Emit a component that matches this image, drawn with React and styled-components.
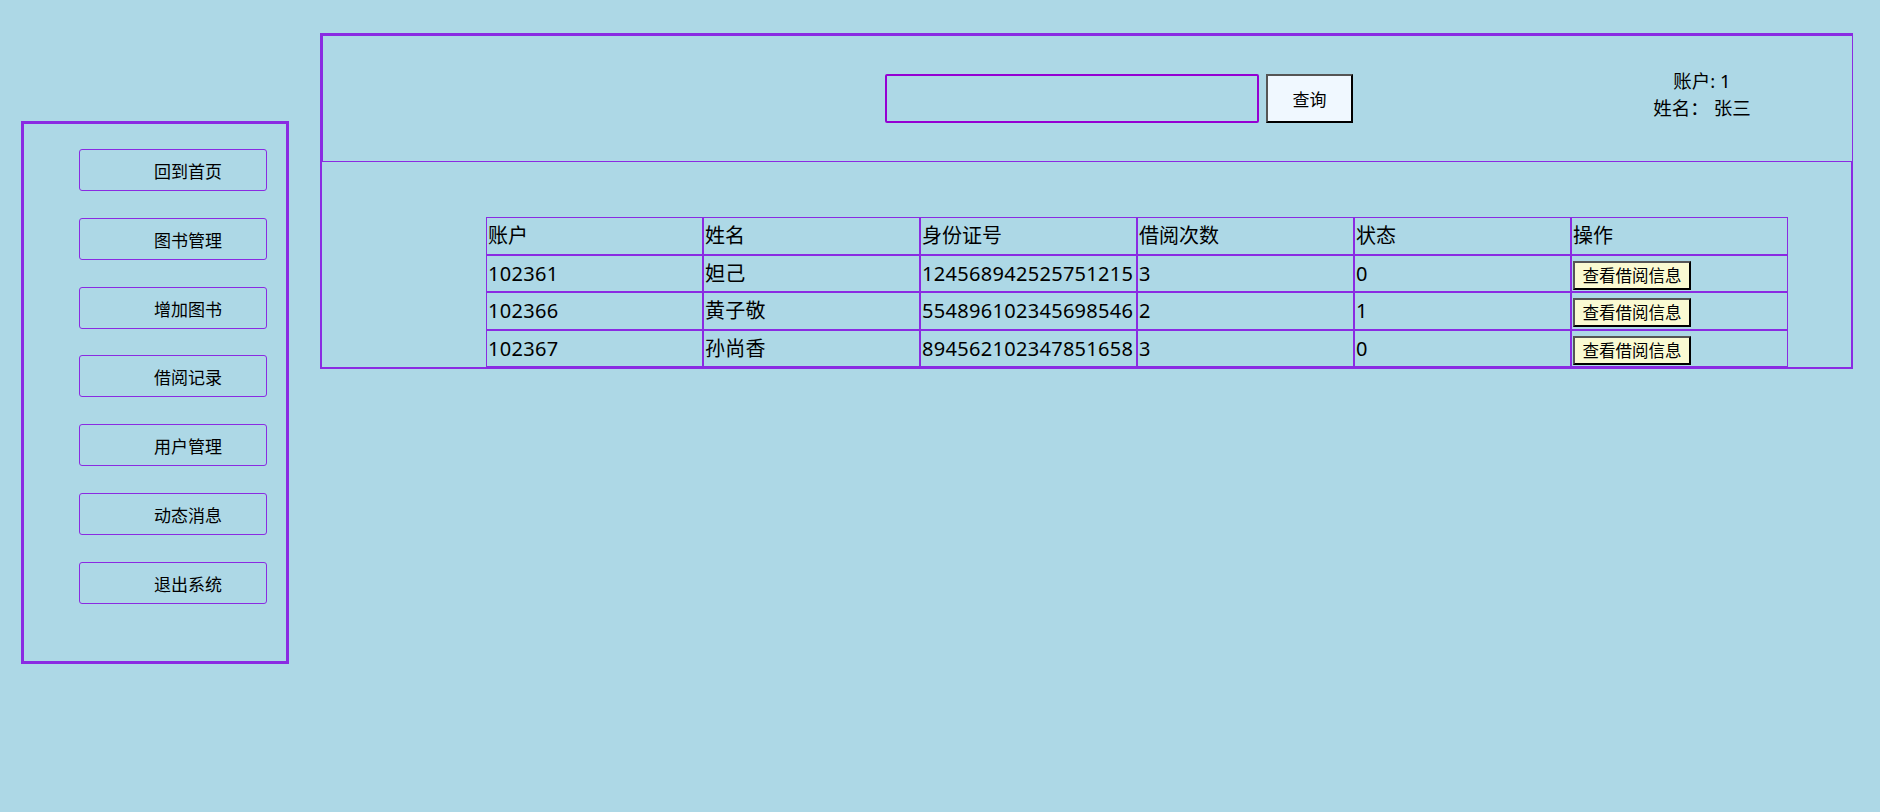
import { createGlobalStyle, styled } from "styled-components";

const menus = ["回到首页", "图书管理", "增加图书", "借阅记录", "用户管理", "动态消息", "退出系统"];

const users = [
  { id: "102361", name: "妲己", card: "124568942525751215", count: 3, state: 0 },
  { id: "102366", name: "黄子敬", card: "554896102345698546", count: 2, state: 1 },
  { id: "102367", name: "孙尚香", card: "894562102347851658", count: 3, state: 0 },
];

const App = () => {
  return (
    <>
      <GlobalStyle />
      <StPage>
        <StSide>
          {menus.map((m) => (
            <StMenuBtn key={m}>{m}</StMenuBtn>
          ))}
        </StSide>
        <StMain>
          <StHeader>
            <StSearch />
            <StQueryBtn>查询</StQueryBtn>
            <StAccount>
              <div>账户: 1</div>
              <div>姓名： 张三</div>
            </StAccount>
          </StHeader>
          <StContent>
            <StTable>
              <thead>
                <tr>
                  <StTh>账户</StTh>
                  <StTh>姓名</StTh>
                  <StTh>身份证号</StTh>
                  <StTh>借阅次数</StTh>
                  <StTh>状态</StTh>
                  <StTh>操作</StTh>
                </tr>
              </thead>
              <tbody>
                {users.map((u) => (
                  <tr key={u.id}>
                    <StTd>{u.id}</StTd>
                    <StTd>{u.name}</StTd>
                    <StTd>{u.card}</StTd>
                    <StTd>{u.count}</StTd>
                    <StTd>{u.state}</StTd>
                    <StTd>
                      <StInfoBtn>查看借阅信息</StInfoBtn>
                    </StTd>
                  </tr>
                ))}
              </tbody>
            </StTable>
          </StContent>
        </StMain>
      </StPage>
    </>
  );
};

export default App;

const GlobalStyle = createGlobalStyle`
  html, body {
    margin: 0;
    min-height: 100%;
    background-color: #add8e6;
  }
  body {
    font-family: "Noto Sans", "Noto Sans CJK SC", sans-serif;
    color: #000;
  }
`;

const StPage = styled.div`
  display: flex;
  align-items: flex-start;
  gap: 31px;
  padding: 33px 27px 0 21px;
  min-height: 812px;
  box-sizing: border-box;
`;

const StSide = styled.div`
  display: flex;
  flex-direction: column;
  gap: 26.8px;
  box-sizing: border-box;
  width: 268px;
  height: 543px;
  margin-top: 88px;
  padding: 25px 0 0 55px;
  border: 3px solid blueviolet;
  flex-shrink: 0;
`;

const StMenuBtn = styled.button`
  box-sizing: border-box;
  width: 188px;
  height: 42px;
  padding: 4px 0 0 74px;
  border: 1px solid blueviolet;
  border-radius: 3px;
  background: transparent;
  font-family: "Noto Sans", "Noto Sans CJK SC", sans-serif;
  font-size: 17px;
  line-height: 36px;
  text-align: left;
  color: #000;
  cursor: pointer;
`;

const StMain = styled.div`
  flex: 1;
  display: flex;
  flex-direction: column;
`;

const StHeader = styled.div`
  display: flex;
  align-items: center;
  height: 125px;
  padding-left: 562px;
  border-style: solid;
  border-color: blueviolet;
  border-width: 3px 1px 1px 3px;
`;

const StSearch = styled.input`
  box-sizing: border-box;
  width: 374px;
  height: 49px;
  border: 2px solid darkviolet;
  border-radius: 2px;
  background: transparent;
  outline: none;
`;

const StQueryBtn = styled.button`
  box-sizing: border-box;
  width: 87px;
  height: 49px;
  margin-left: 7px;
  border: 2px solid;
  border-color: #555 #000 #000 #555;
  background-color: aliceblue;
  font-family: "Noto Sans", "Noto Sans CJK SC", sans-serif;
  font-size: 17px;
  color: #000;
  padding: 0;
`;

const StAccount = styled.div`
  align-self: flex-start;
  width: 200px;
  margin: 31px 0 0 249px;
  font-size: 18.5px;
  line-height: 27px;
  text-align: center;
`;

const StContent = styled.div`
  padding: 55px 0 0 164px;
  border-style: solid;
  border-color: blueviolet;
  border-width: 0 2px 2px 2px;
`;

const StTable = styled.table`
  width: 1302px;
  table-layout: fixed;
  border-collapse: separate;
  border-spacing: 0;
`;

const StTh = styled.th`
  border: 1px solid blueviolet;
  padding: 0 1px;
  font-size: 20px;
  font-weight: 400;
  line-height: 35.6px;
  text-align: left;
  white-space: nowrap;
`;

const StTd = styled.td`
  border: 1px solid blueviolet;
  padding: 0 1px;
  font-size: 20px;
  letter-spacing: 0.3px;
  line-height: 35.6px;
  text-align: left;
  white-space: nowrap;
`;

const StInfoBtn = styled.button`
  box-sizing: border-box;
  width: 118px;
  height: 29px;
  padding: 0;
  border: 2px solid;
  border-color: #555 #000 #000 #555;
  background-color: #fafad2;
  font-family: "Noto Sans", "Noto Sans CJK SC", sans-serif;
  font-size: 16.5px;
  letter-spacing: 0;
  line-height: 25px;
  color: #000;
  vertical-align: middle;
`;
